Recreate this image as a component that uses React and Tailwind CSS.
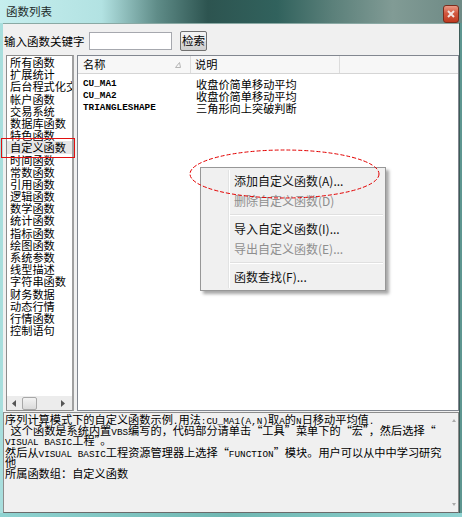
const cjk = "font-['Noto_Sans_CJK_SC',sans-serif]";
const mono = "font-['Liberation_Mono',monospace]";

const groups = [
  "所有函数", "扩展统计", "后台程式化交易", "帐户函数", "交易系统", "数据库函数",
  "特色函数", "自定义函数", "时间函数", "常数函数", "引用函数", "逻辑函数",
  "数学函数", "统计函数", "指标函数", "绘图函数", "系统参数", "线型描述",
  "字符串函数", "财务数据", "动态行情", "行情函数", "控制语句",
];

const funcs = [
  { name: "CU_MA1", desc: "收盘价简单移动平均" },
  { name: "CU_MA2", desc: "收盘价简单移动平均" },
  { name: "TRIANGLESHAPE", desc: "三角形向上突破判断" },
];

const helpLines = [
  { text: "序列计算模式下的自定义函数示例.用法:CU_MA1(A,N)取A的N日移动平均值.", h: "h-[11px] leading-[11px]" },
  { text: " 这个函数是系统内置VBS编写的，代码部分请单击“工具”菜单下的“宏”，然后选择“", h: "h-[10px] leading-[10px]" },
  { text: "VISUAL BASIC工程”。", h: "h-[11px] leading-[11px]" },
  { text: "然后从VISUAL BASIC工程资源管理器上选择“FUNCTION”模块。用户可以从中中学习研究", h: "h-[12px] leading-[12px]" },
  { text: "他", h: "h-[9px] leading-[9px]" },
  { text: "所属函数组：自定义函数", h: "h-[13px] leading-[13px]" },
];

function Mixed({ text }) {
  const parts = text.split(/([\x20-\x7e]+)/).filter((p) => p !== "");
  return parts.map((p, i) =>
    /^[\x20-\x7e]/.test(p) ? (
      <span key={i} className={`${mono} text-[9.33px]`}>{p}</span>
    ) : (
      <span key={i}>{p}</span>
    )
  );
}

function MenuItem({ label, disabled }) {
  return (
    <div className={`h-[20px] flex items-center pl-[33px] text-[12px] ${disabled ? "text-[#8e8e8e]" : "text-[#111]"}`}>
      {label}
    </div>
  );
}

function MenuSep() {
  return (
    <div className="h-[8px] flex items-center pl-[28px] pr-[2px]">
      <div className="h-[2px] w-full border-t border-[#e0e0e0] border-b border-b-white" />
    </div>
  );
}

export default function App() {
  return (
    <div className={`relative w-[462px] h-[517px] overflow-hidden ${cjk} text-black select-none`}>
      {/* title bar */}
      <div className="h-[23px] flex justify-between pl-[6px] pr-[3px] bg-[linear-gradient(90deg,#c6eeee_0%,#b2e2e2_22%,#5f8c88_34%,#2d5450_45%,#31625d_60%,#5b807a_72%,#819b95_85%,#6e8a85_100%)]">
        <span className="text-[11.5px] leading-[23px] text-[#1e2b2b]">函数列表</span>
        <div className="mt-[5px] w-[16px] h-[18px] rounded-[3px] border border-[#7a2c1c] bg-[linear-gradient(180deg,#e99a86_0%,#d2583f_45%,#c0391f_100%)] flex items-center justify-center">
          <svg width="8" height="8" viewBox="0 0 8 8">
            <path d="M1 1 L7 7 M7 1 L1 7" stroke="#f4e6e2" strokeWidth="2" />
          </svg>
        </div>
      </div>

      <div className="flex h-[490px]">
        <div className="w-[3px] bg-[#a8dedd]" />
        <div className="w-[456px] bg-[#f0f0f0] flex flex-col border-t border-[#8aa9a4]">
          {/* search row */}
          <div className="mt-[7px] h-[20px] flex items-center pl-[1px]">
            <span className="w-[85px] text-[11.5px] leading-[20px] whitespace-nowrap">输入函数关键字</span>
            <div className="w-[83px] h-[18px] bg-white border border-[#a6a8ae]" />
            <div className="ml-[8px] w-[27px] h-[20px] rounded-[2px] border border-[#707070] bg-[linear-gradient(180deg,#f4f4f4_0%,#ebebeb_50%,#dcdcdc_51%,#d0d0d0_100%)] flex items-center justify-center text-[11.5px]">
              检索
            </div>
          </div>

          {/* panels */}
          <div className="mt-[4px] h-[356px] flex gap-[3px] pl-[3px]">
            {/* group list */}
            <div className="w-[68px] border border-[#8c8c8c] border-r-2 border-r-[#a0a0a0] bg-white flex flex-col">
              <div className="flex-1 overflow-hidden">
                {groups.map((g) => (
                  <div
                    key={g}
                    className={`h-[12.2px] leading-[12.2px] pl-[3px] text-[11.2px] whitespace-nowrap ${g === "自定义函数" ? "bg-[#e6e6e6]" : ""}`}
                  >
                    {g}
                  </div>
                ))}
              </div>
              <div className="h-[14px] bg-[#ececec] flex items-center pl-[5px]">
                <svg width="4" height="7" viewBox="0 0 4 7"><path d="M4 0 L0 3.5 L4 7 Z" fill="#555" /></svg>
                <div className="ml-[6px] w-[15px] h-[13px] rounded-[2px] border border-[#a8a8a8] bg-[linear-gradient(180deg,#f3f3f3,#dadada)]" />
                <div className="flex-1" />
                <svg className="mr-[7px]" width="4" height="7" viewBox="0 0 4 7"><path d="M0 0 L4 3.5 L0 7 Z" fill="#555" /></svg>
              </div>
            </div>

            {/* function list */}
            <div className="flex-1 border border-[#828790] bg-white flex flex-col">
              <div className="h-[18px] flex border-b border-[#d5d5d5] bg-[#f7f7f7] text-[11.2px]">
                <div className="w-[113px] flex items-center justify-between pl-[5px] pr-[9px] border-r border-[#dcdcdc]">
                  <span>名称</span>
                  <svg width="6" height="6" viewBox="0 0 6 6">
                    <path d="M4.5 0.5 L0.5 5.5 L5.5 5.5 Z" fill="none" stroke="#b5b5b5" strokeWidth="1" />
                  </svg>
                </div>
                <div className="w-[149px] flex items-center pl-[4px] border-r border-[#dcdcdc]">说明</div>
              </div>
              <div className="pt-[4px]">
                {funcs.map((f) => (
                  <div key={f.name} className="h-[12px] flex items-center">
                    <span className={`w-[114px] pl-[5px] ${mono} font-bold text-[9.33px] leading-[12px]`}>{f.name}</span>
                    <span className="pl-[4px] text-[11.2px] leading-[12px]">{f.desc}</span>
                  </div>
                ))}
              </div>
            </div>
          </div>

          {/* help text */}
          <div className="mt-[1px] h-[101px] border border-[#8c8c8c] border-b-[#6b6b6b] bg-[#f0f0f0] flex">
            <div className="flex-1 pt-[1px] pl-[1px] text-[11.2px] overflow-hidden">
              {helpLines.map((l, i) => (
                <div key={i} className={`${l.h} whitespace-pre`}>
                  <Mixed text={l.text} />
                </div>
              ))}
            </div>
            <div className="w-[8px] flex flex-col justify-between items-center py-[6px]">
              <svg width="4" height="3" viewBox="0 0 4 3"><path d="M2 0 L4 3 L0 3 Z" fill="#aaa" /></svg>
              <svg width="4" height="3" viewBox="0 0 4 3"><path d="M0 0 L4 0 L2 3 Z" fill="#aaa" /></svg>
            </div>
          </div>
        </div>
        <div className="w-[3px] bg-[#5e9690] border-l border-[#3d5d59]" />
      </div>
      <div className="h-[4px] bg-[linear-gradient(90deg,#8fd3d1,#6fb7b2_50%,#8fd3d1)]" />

      {/* red highlight around selected group */}
      <div className="absolute left-[1px] top-[138px] w-[74px] h-[20px] border border-[#e01010]" />

      {/* context menu */}
      <div className="absolute left-[200px] top-[167px] w-[186px] py-[3px] bg-[#f0f0f0] border border-[#979797] shadow-[3px_3px_3px_rgba(0,0,0,0.35)]">
        <div className="absolute left-[27px] top-[2px] bottom-[2px] w-[2px] border-l border-[#e2e3e3] border-r border-r-white" />
        <MenuItem label="添加自定义函数(A)..." />
        <MenuItem label="删除自定义函数(D)" disabled />
        <MenuSep />
        <MenuItem label="导入自定义函数(I)..." />
        <MenuItem label="导出自定义函数(E)..." disabled />
        <MenuSep />
        <MenuItem label="函数查找(F)..." />
      </div>

      {/* red annotation ellipse */}
      <svg className="absolute left-0 top-0 pointer-events-none" width="462" height="517">
        <ellipse cx="284.5" cy="174" rx="94.5" ry="24" fill="none" stroke="#e30000" strokeWidth="1" strokeDasharray="4 2" />
      </svg>
    </div>
  );
}
